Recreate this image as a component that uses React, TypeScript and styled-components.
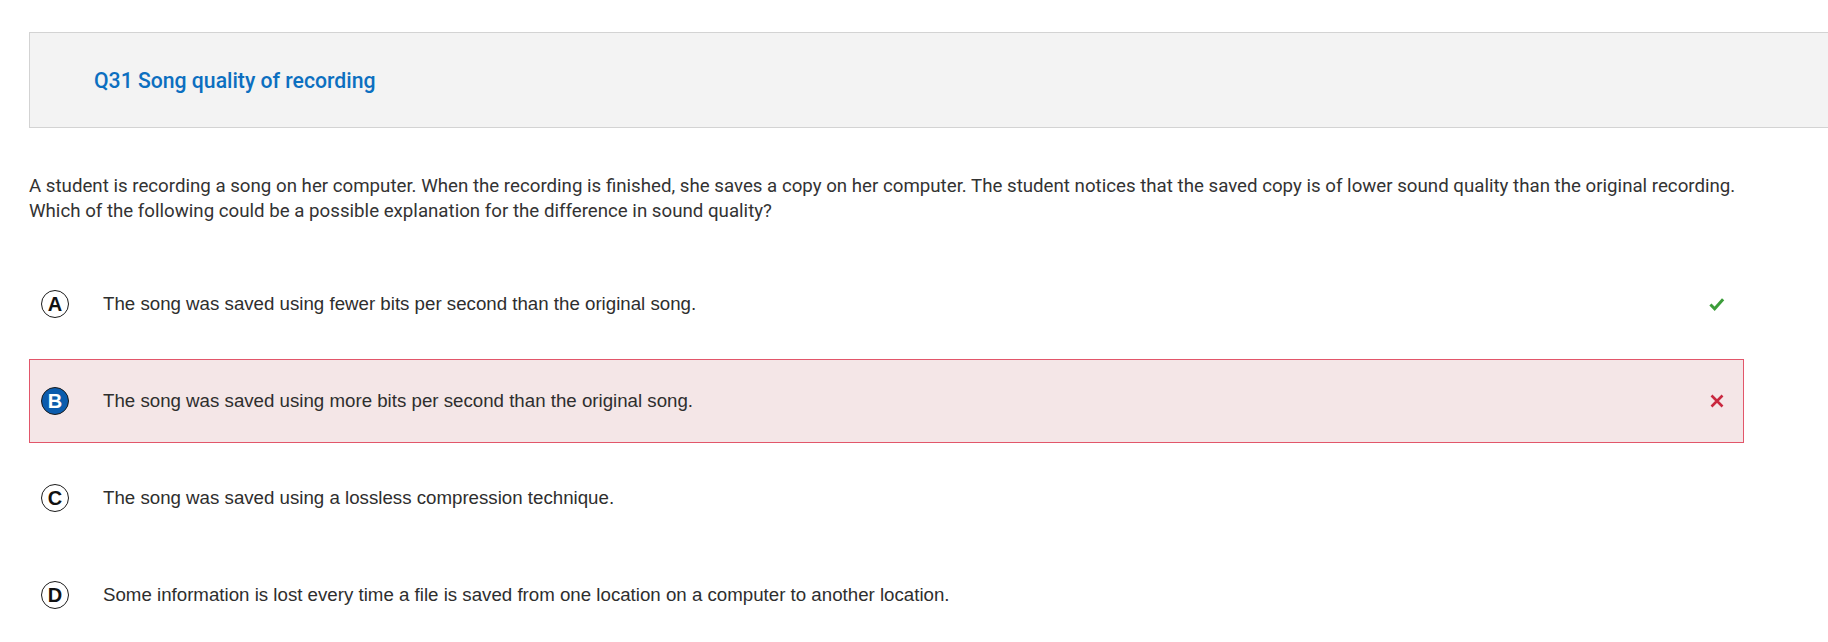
import React from 'react';
import styled, { createGlobalStyle } from 'styled-components';

const GlobalStyle = createGlobalStyle`
  html, body {
    margin: 0;
    padding: 0;
    background: #ffffff;
    overflow: hidden;
  }
`;

const Page = styled.div`
  padding: 32px 0 0 29px;
  width: 1828px;
  box-sizing: border-box;
`;

const Header = styled.div`
  display: flex;
  align-items: center;
  height: 96px;
  width: 1820px;
  box-sizing: border-box;
  background: #f3f3f3;
  border: 1px solid #d3d3d3;
  padding-left: 64px;
`;

const Title = styled.h2`
  margin: 0;
  font-family: Roboto, 'Noto Sans', sans-serif;
  font-weight: 500;
  font-size: 21.2px;
  color: #0c6fc0;
`;

const Stem = styled.p`
  margin: 46px 0 0;
  width: 1715px;
  font-family: Roboto, 'Noto Sans', sans-serif;
  font-size: 18.7px;
  line-height: 25px;
  color: #333333;
`;

const Choices = styled.ul`
  list-style: none;
  margin: 38px 0 0;
  padding: 0;
  width: 1715px;
`;

const Choice = styled.li<{ $wrong?: boolean }>`
  display: flex;
  align-items: center;
  height: 84px;
  box-sizing: border-box;
  margin-bottom: 13px;
  padding: 0 18px 0 11px;
  border: 1px solid ${(p) => (p.$wrong ? '#e2566a' : 'transparent')};
  background: ${(p) => (p.$wrong ? '#f4e6e7' : 'transparent')};
`;

const Letter = styled.span<{ $selected?: boolean }>`
  display: flex;
  align-items: center;
  justify-content: center;
  flex: none;
  width: 28px;
  height: 28px;
  box-sizing: border-box;
  border-radius: 50%;
  border: 1.5px solid #1a1a1a;
  background: ${(p) => (p.$selected ? '#0b5cad' : '#ffffff')};
  color: ${(p) => (p.$selected ? '#ffffff' : '#111111')};
  font-family: 'Liberation Sans', Arial, sans-serif;
  font-weight: 700;
  font-size: 20px;
`;

const ChoiceText = styled.span`
  flex: 1;
  margin-left: 34px;
  font-family: 'Liberation Sans', Arial, sans-serif;
  font-size: 18.7px;
  color: #2e2e2e;
`;

const Mark = styled.span`
  display: flex;
  width: 16px;
  justify-content: center;
`;

const Check = () => (
  <svg width="17" height="14" viewBox="0 0 17 14">
    <path d="M1.5 7.5 L6 12 L15 2" fill="none" stroke="#3c9d3a" strokeWidth="3.2" />
  </svg>
);

const Cross = () => (
  <svg width="14" height="14" viewBox="0 0 14 14">
    <path d="M1.5 1.5 L12.5 12.5 M12.5 1.5 L1.5 12.5" fill="none" stroke="#c9283f" strokeWidth="2.6" />
  </svg>
);

const options = [
  { key: 'A', text: 'The song was saved using fewer bits per second than the original song.', mark: 'correct' },
  { key: 'B', text: 'The song was saved using more bits per second than the original song.', mark: 'wrong' },
  { key: 'C', text: 'The song was saved using a lossless compression technique.' },
  { key: 'D', text: 'Some information is lost every time a file is saved from one location on a computer to another location.' },
];

export default function App() {
  return (
    <>
      <GlobalStyle />
      <Page>
        <Header>
          <Title>Q31 Song quality of recording</Title>
        </Header>
        <Stem>
          A student is recording a song on her computer. When the recording is finished, she saves a copy on her
          computer. The student notices that the saved copy is of lower sound quality than the original recording.
          Which of the following could be a possible explanation for the difference in sound quality?
        </Stem>
        <Choices>
          {options.map((o) => (
            <Choice key={o.key} $wrong={o.mark === 'wrong'}>
              <Letter $selected={o.mark === 'wrong'}>{o.key}</Letter>
              <ChoiceText>{o.text}</ChoiceText>
              <Mark>
                {o.mark === 'correct' && <Check />}
                {o.mark === 'wrong' && <Cross />}
              </Mark>
            </Choice>
          ))}
        </Choices>
      </Page>
    </>
  );
}
